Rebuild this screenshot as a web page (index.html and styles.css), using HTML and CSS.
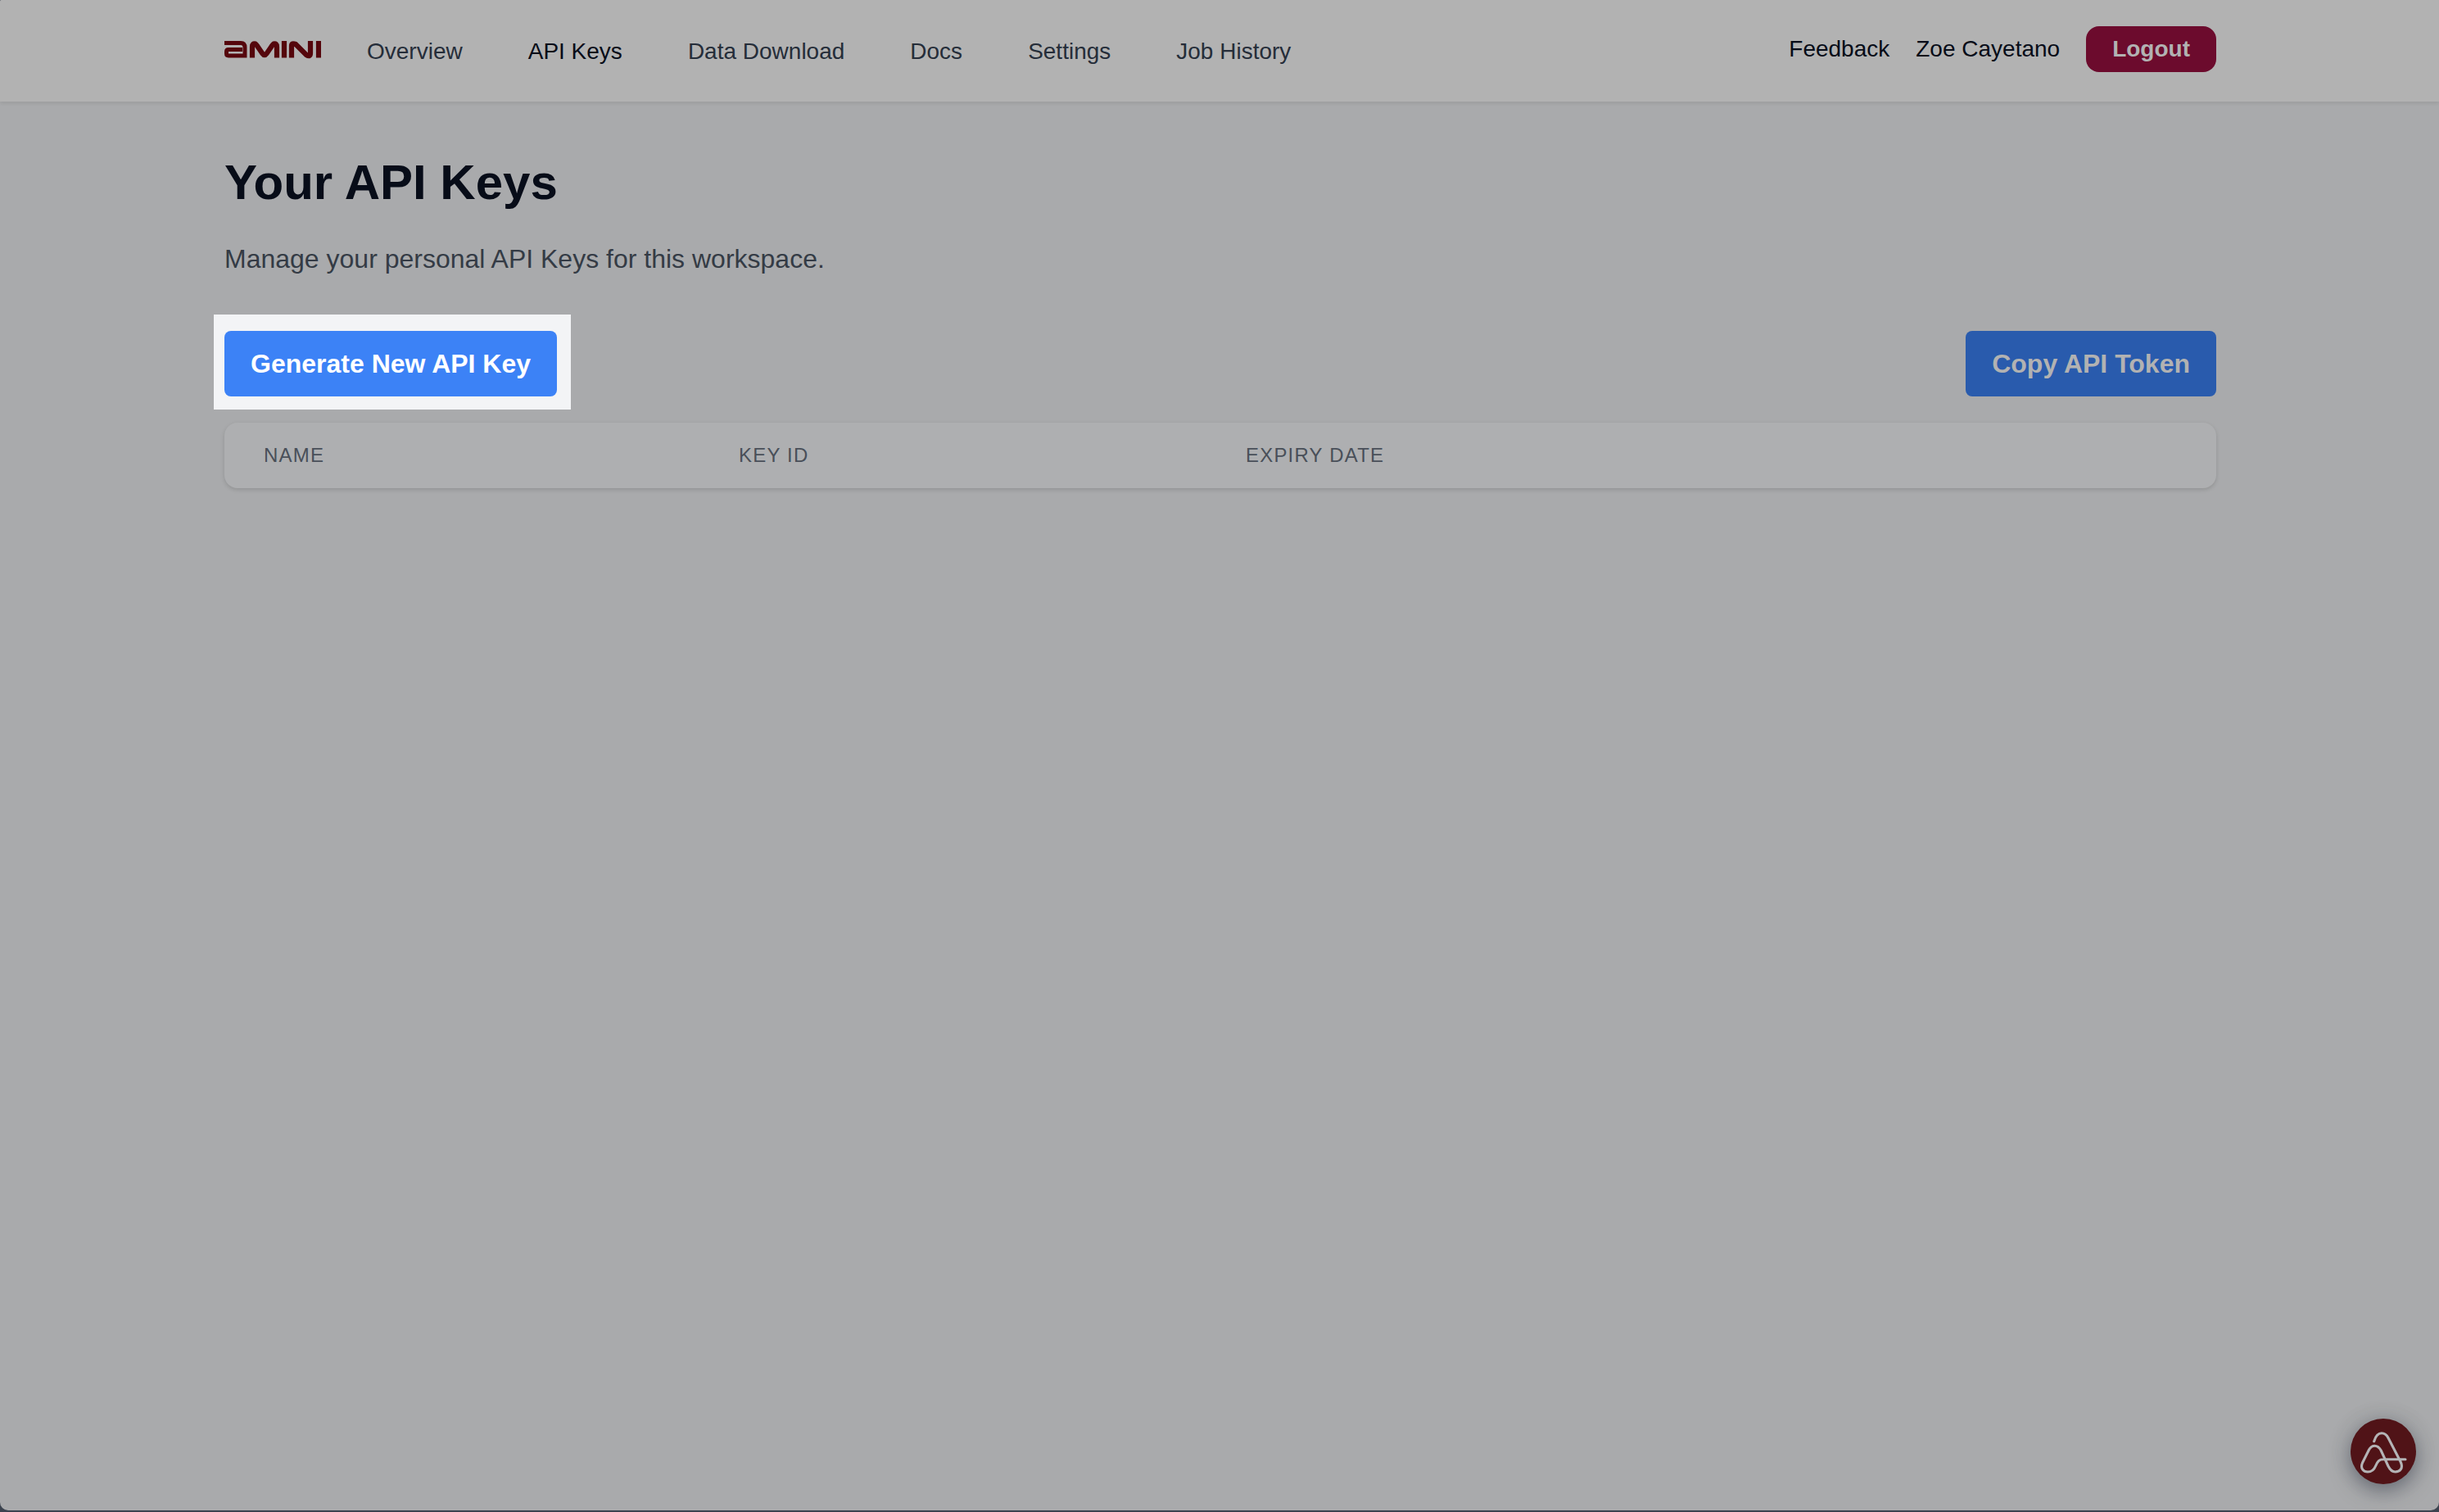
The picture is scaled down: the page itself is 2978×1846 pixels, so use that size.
FILE: index.html
```html
<!DOCTYPE html>
<html lang="en">
<head>
<meta charset="utf-8">
<title>Your API Keys</title>
<link rel="stylesheet" href="styles.css">
</head>
<body>
<div class="page">
  <header class="header">
    <div class="container header-row">
      <svg class="logo" width="118" height="22" viewBox="0 0 118 22" aria-label="Amini">
        <g fill="none" stroke="currentColor" stroke-linejoin="round">
          <path stroke-width="5" d="M0 2.500H20Q25 2.500 25 8V20.500M25 18H5Q2.500 18 2.500 15.600V13Q2.500 10.400 5 10.400H22"/>
          <path stroke-width="6.2" d="M34 20.500V7Q34 2.500 38 3.600Q39 4.200 40 6L46.500 15.500Q49 19 51.500 15.500L58 6Q59 4.200 60 3.600Q64 2.500 64 7V20.500M73 0V20.500M82 20.500V6Q82 2 87 4L100 17Q105 20 105 15V0M115 0V20.500"/>
        </g>
      </svg>
      <nav class="nav">
        <a>Overview</a>
        <a class="active">API Keys</a>
        <a>Data Download</a>
        <a>Docs</a>
        <a>Settings</a>
        <a>Job History</a>
      </nav>
      <div class="account">
        <a>Feedback</a>
        <span>Zoe Cayetano</span>
        <button class="logout">Logout</button>
      </div>
    </div>
  </header>
  <main class="container main">
    <h1>Your API Keys</h1>
    <p class="lead">Manage your personal API Keys for this workspace.</p>
    <div class="actions">
      <div class="spotlight"><button class="btn btn-bright">Generate New API Key</button></div>
      <button class="btn">Copy API Token</button>
    </div>
    <div class="table">
      <div>NAME</div>
      <div>KEY ID</div>
      <div>EXPIRY DATE</div>
    </div>
  </main>
  <button class="launcher" aria-label="Open assistant">
    <svg width="80" height="80" viewBox="0 0 80 80" fill="none" stroke="#b4b4b6" stroke-width="3.1" stroke-linecap="round" stroke-linejoin="round">
      <path d="M28.700 27.700C31 20 34 17.800 38 17.800C42 17.800 44 19.500 46 23.500L61 52.500C65 61 60 65 54.500 65C50 65 48 62 46 58L37 38.500C33 31.500 26 31.500 22.500 38L14.500 54C11.500 61 16 65 21 65C26 65 28.500 63 30.500 58C33 52 35 49.700 40 49.700H67"/>
    </svg>
  </button>
</div>
</body>
</html>
```
FILE: styles.css
```css
* { box-sizing: border-box; }

body {
  margin: 0;
  background: #3c434f;
  color: #070c18;
  font: 28px/40px "Liberation Sans", Arial, sans-serif;
}

button {
  border: 0;
  font: inherit;
  font-weight: 700;
}

.page {
  position: relative;
  height: 1844px;
  background: #a9aaac;
  border-radius: 2px 0 10px 10px;
  overflow: hidden;
}

.container {
  width: 2432px;
  margin: 0 auto;
  transform: translateX(1px);
}

.header {
  height: 124px;
  background: #b2b2b2;
  box-shadow: 0 2px 4px rgba(0, 0, 0, .05), 0 2px 6px rgba(0, 0, 0, .04);
}

.header-row {
  display: flex;
  height: 124px;
  align-items: center;
}

.logo {
  margin: 0 56px 3px 0;
  color: #55060c;
}

.nav {
  display: flex;
  gap: 80px;
  padding-top: 1px;
  color: #252d39;
}

.nav .active { color: #070c18; }

.account {
  display: flex;
  align-items: center;
  gap: 32px;
  margin: 0 0 4px auto;
}

.logout {
  height: 56px;
  padding: 0 32px;
  border-radius: 16px;
  background: #6c0b2d;
  color: #b2b2b2;
}

.main { padding-top: 63px; }

h1 {
  margin: 0;
  font-size: 60px;
  line-height: 72px;
}

.lead {
  margin: 33px 0 44px;
  color: #343b45;
  font-size: 32px;
  line-height: 48px;
}

.actions {
  display: flex;
  justify-content: space-between;
  align-items: flex-start;
}

.spotlight {
  padding: 20px 17px 16px 13px;
  margin-left: -13px;
  background: #f3f4f6;
}

.actions > .btn { margin-top: 20px; }

.btn {
  display: block;
  height: 80px;
  padding: 0 32px;
  border-radius: 8px;
  background: #295bad;
  color: #b2b2b2;
  font-size: 32px;
  line-height: 48px;
}

.btn-bright {
  background: #3c82f6;
  color: #fff;
}

.table {
  display: grid;
  grid-template-columns: 580px 619px 1fr;
  height: 80px;
  margin-top: 16px;
  padding: 24px 48px;
  border-radius: 16px;
  background: #aeafb1;
  box-shadow: 0 2px 6px rgba(0, 0, 0, .07), 0 2px 4px rgba(0, 0, 0, .07);
  color: #494f59;
  font-size: 24px;
  line-height: 32px;
  letter-spacing: 1.2px;
}

.launcher {
  position: absolute;
  right: 28px;
  bottom: 32px;
  width: 80px;
  height: 80px;
  padding: 0;
  border-radius: 50%;
  background: #501317;
  box-shadow: 0 8px 24px rgba(45, 52, 68, .5), 0 0 28px rgba(60, 65, 75, .12);
}

.launcher svg { display: block; }
```
